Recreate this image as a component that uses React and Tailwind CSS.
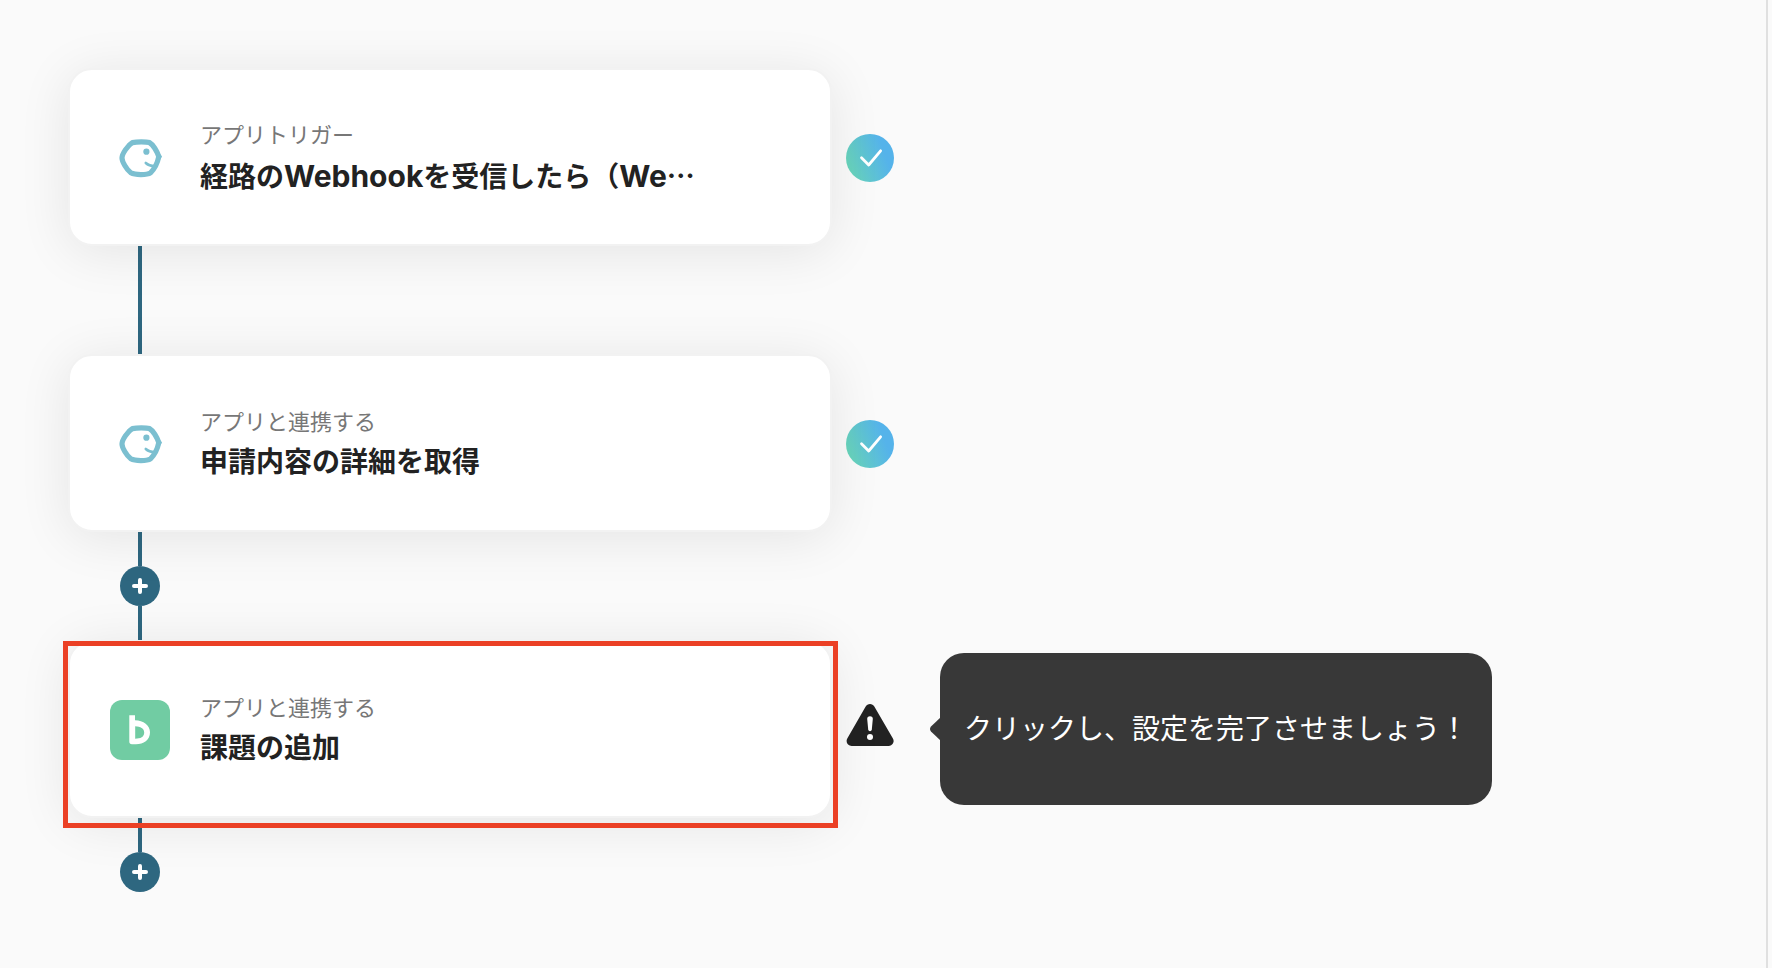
import React from "react";

const steps = [
  {
    id: 1,
    app: "fish",
    label: "アプリトリガー",
    title: "経路のWebhookを受信したら（We",
    truncated: true,
    status: "done",
    canAdd: false,
  },
  {
    id: 2,
    app: "fish",
    label: "アプリと連携する",
    title: "申請内容の詳細を取得",
    status: "done",
    canAdd: true,
  },
  {
    id: 3,
    app: "backlog",
    label: "アプリと連携する",
    title: "課題の追加",
    status: "warning",
    hint: "クリックし、設定を完了させましょう！",
    highlighted: true,
    canAdd: true,
  },
];

function FishIcon() {
  return (
    <svg className="size-15 shrink-0" viewBox="0 1 60 60" fill="none" aria-hidden="true">
      <path
        d="M22.500 15.600 C27 14.500 36 14.500 39.500 15.600 C43 17.500 47 24 48.800 29.600 C47.500 36 44 42.500 40.500 45.800 C37 48.100 25 48.100 20.800 45.800 C16.500 42.500 12 34.500 12 31 C12 27 17.500 18.500 22.500 15.600 Z"
        stroke="#7bbfd0"
        strokeWidth="5.200"
      />
      <path d="M48 24.500 L52 29.600 L47.500 37 Z" fill="#7bbfd0" />
      <circle cx="36.400" cy="24.700" r="3.100" fill="#7bbfd0" />
      <path d="M35.800 36 Q38.800 38.800 45 39.300" stroke="#7bbfd0" strokeWidth="2.600" strokeLinecap="round" />
    </svg>
  );
}

function BacklogIcon() {
  return (
    <svg className="size-15 shrink-0" viewBox="0 0 60 60" aria-hidden="true">
      <rect width="60" height="60" rx="12" fill="#71cca3" />
      <path
        fill="#fff"
        fillRule="evenodd"
        d="M19.300 15.300 H25 V20.200 C33.500 20.600 40 25 40 32.300 C40 40.300 33.500 44.300 26 44.300 H22 Q19.300 44.300 19.300 41.500 Z M25.200 26.300 V38.700 C30.500 38.700 34.200 37 34.200 32.500 C34.200 28.500 30.500 26.500 25.200 26.300 Z"
      />
    </svg>
  );
}

function DoneBadge() {
  return (
    <span className="mt-0.5 flex size-12 shrink-0 items-center justify-center rounded-full bg-linear-70/srgb from-[#69d5ba] from-10% to-[#55b3ea] to-75%">
      <svg className="size-12" viewBox="0 0 48 48" fill="none" role="img" aria-label="設定済み">
        <path d="M15.500 23.700 L22.700 31 L34.600 16.800" stroke="#fff" strokeWidth="2.800" strokeLinecap="round" strokeLinejoin="round" />
      </svg>
    </span>
  );
}

function WarningBadge() {
  return (
    <svg className="mb-2 size-12 shrink-0" viewBox="0 0 48 48" role="img" aria-label="未設定">
      <path d="M24 8 L42.600 40 H5.600 Z" fill="#222" stroke="#222" strokeWidth="10" strokeLinejoin="round" />
      <path d="M21.200 18 Q21.200 15.200 24 15.200 Q26.800 15.200 26.800 18 L25.800 28.600 Q25.600 30.300 24 30.300 Q22.400 30.300 22.200 28.600 Z" fill="#fff" />
      <circle cx="24" cy="36" r="3" fill="#fff" />
    </svg>
  );
}

function Hint({ text }) {
  return (
    <div className="relative ml-8 flex min-h-38 items-center rounded-3xl bg-[#383838] px-6">
      <svg className="absolute top-1/2 -left-[10px] h-6 w-[11px] -translate-y-1/2" viewBox="0 0 11 24" aria-hidden="true">
        <path d="M11 0 L1 9.500 Q-1 12 1 14.500 L11 24 Z" fill="#383838" />
      </svg>
      <p className="text-[28px] leading-10 text-white">{text}</p>
    </div>
  );
}

function Connector({ canAdd, last }) {
  return (
    <div className="ml-[52px] flex w-10 flex-col items-center">
      <div className={canAdd ? "h-[34px] w-1 bg-[#2e6780]" : "h-[108px] w-1 bg-[#2e6780]"} />
      {canAdd && (
        <button
          type="button"
          aria-label="ステップを追加"
          className="flex size-10 items-center justify-center rounded-full bg-[#2e6780]"
        >
          <svg className="size-10" viewBox="0 0 40 40" fill="none" aria-hidden="true">
            <path d="M20 14 V26 M14 20 H26" stroke="#fff" strokeWidth="4" strokeLinecap="round" />
          </svg>
        </button>
      )}
      {canAdd && !last && <div className="h-[34px] w-1 bg-[#2e6780]" />}
    </div>
  );
}

// Latin runs are set a little larger so they sit level with the kanji
function Title({ text, truncated }) {
  return (
    <span className="truncate text-[28px] leading-11 font-bold text-[#222]">
      {text.split(/([A-Za-z]+)/).map((part, idx) =>
        /[A-Za-z]/.test(part) ? (
          <span key={idx} className="text-[30px] leading-none">
            {part}
          </span>
        ) : (
          part
        )
      )}
      {truncated && <span className="font-['Noto_Sans_CJK_JP',sans-serif]">…</span>}
    </span>
  );
}

function Step({ step, last }) {
  return (
    <li>
      <div className="flex items-center gap-[14px]">
        <div className="relative w-full max-w-[764px]">
          <button
            type="button"
            className="flex h-[178px] w-full items-center gap-[30px] rounded-3xl border-2 border-[#f2f2f2] bg-white px-10 pt-[2px] text-left shadow-[0_6px_52px_rgba(0,0,0,0.09)]"
          >
            {step.app === "fish" ? <FishIcon /> : <BacklogIcon />}
            <span className="flex min-w-0 flex-col">
              <span className="text-[22px] leading-9 text-[#777]">{step.label}</span>
              <Title text={step.title} truncated={step.truncated} />
            </span>
          </button>
          {step.highlighted && (
            <div className="pointer-events-none absolute top-px -right-[6px] -bottom-[10px] -left-[5px] z-10 border-5 border-[#eb4025]" />
          )}
        </div>
        {step.status === "done" ? <DoneBadge /> : <WarningBadge />}
        {step.hint && <Hint text={step.hint} />}
      </div>
      <Connector canAdd={step.canAdd} last={last} />
    </li>
  );
}

function App() {
  return (
    <div lang="ja" className="flex min-h-screen bg-[#fafafa] pr-1 font-[Inter,'Noto_Sans_CJK_JP',sans-serif]">
      <main className="flex-1 overflow-hidden border-r-2 border-[#e0e0e0] pt-[68px] pl-[68px]">
        <ol>
          {steps.map((step, idx) => (
            <Step key={step.id} step={step} last={idx === steps.length - 1} />
          ))}
        </ol>
      </main>
    </div>
  );
}

export default App;
